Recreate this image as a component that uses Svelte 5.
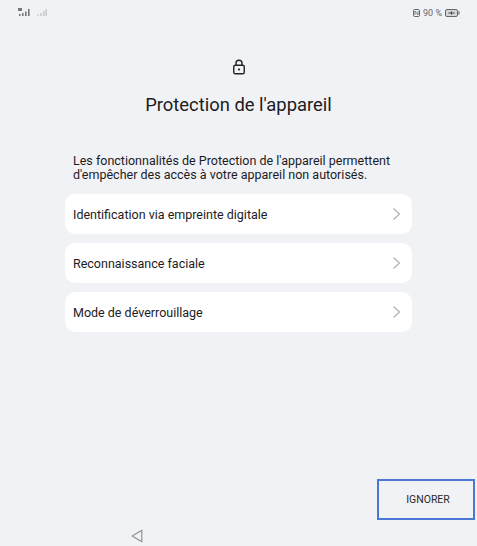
<script>
  const rows = [
    "Identification via empreinte digitale",
    "Reconnaissance faciale",
    "Mode de déverrouillage"
  ];
</script>

<div class="screen">
  <header class="status">
    <div class="status-left">
      <svg width="13" height="9" viewBox="0 0 13 9">
        <rect x="0" y="0" width="4" height="3" fill="#77787c" />
        <path d="M1 8h1.6V6H1zM4 8h1.6V5H4zM7 8h1.6V3.5H7zM10 8h1.6V1H10z" fill="#77787c" />
      </svg>
      <svg width="10" height="9" viewBox="0 0 10 9">
        <path d="M0 8h1.6V6.5H0zM3 8h1.6V5H3zM6 8h1.6V3H6zM8.4 8H10V1H8.4z" fill="#c9cace" />
      </svg>
    </div>
    <div class="status-right">
      <svg width="7" height="8" viewBox="0 0 7 8">
        <rect x="0.5" y="0.5" width="6" height="7" rx="1.2" fill="none" stroke="#66676b" />
        <path d="M2 2l3 4M2 2v4M5 2v4" stroke="#66676b" stroke-width="0.8" fill="none" />
      </svg>
      <span>90 %</span>
      <svg width="15" height="8" viewBox="0 0 15 8">
        <rect x="0.5" y="0.5" width="12" height="7" rx="1.5" fill="#d4d5d8" stroke="#66676b" />
        <rect x="13.3" y="2.5" width="1.2" height="3" fill="#66676b" />
        <path d="M3.5 4h6M6.5 2.4v3.2" stroke="#444" stroke-width="1" />
      </svg>
    </div>
  </header>

  <main class="content">
    <svg class="lock" width="14" height="16" viewBox="0 0 14 16">
      <rect x="1.75" y="6.25" width="10.5" height="8.5" rx="1.6" fill="none" stroke="#222" stroke-width="1.4" />
      <path d="M4 6.2V4.2a3 3 0 0 1 6 0v2" fill="none" stroke="#222" stroke-width="1.4" />
      <circle cx="7" cy="10.5" r="1.1" fill="#222" />
    </svg>
    <h1>Protection de l'appareil</h1>
    <p>Les fonctionnalités de Protection de l'appareil permettent d'empêcher des accès à votre appareil non autorisés.</p>
    <ul>
      {#each rows as row}
        <li>
          <span>{row}</span>
          <svg width="9" height="14" viewBox="0 0 9 14">
            <path d="M1.5 1.5L7.5 7L1.5 12.5" fill="none" stroke="#b0b1b5" stroke-width="1.2" />
          </svg>
        </li>
      {/each}
    </ul>
  </main>

  <div class="actions">
    <button>IGNORER</button>
  </div>

  <footer class="nav">
    <svg width="12" height="14" viewBox="0 0 12 14">
      <path d="M10.8 1.2V12.8L1.2 7Z" fill="none" stroke="#8f9094" stroke-width="1.2" stroke-linejoin="round" />
    </svg>
  </footer>
</div>

<style>
  :global(body) {
    background: #f1f2f6;
  }
  .screen {
    display: flex;
    flex-direction: column;
    height: 546px;
    width: 477px;
    overflow: hidden;
    background: #f1f2f6;
    color: #1c1c1e;
    font-family: Roboto, "Liberation Sans", sans-serif;
  }
  .status {
    display: flex;
    justify-content: space-between;
    align-items: center;
    height: 9px;
    margin-top: 8px;
    padding: 0 17px 0 18px;
  }
  .status-left {
    display: flex;
    align-items: center;
    gap: 6px;
  }
  .status-right {
    display: flex;
    align-items: center;
    gap: 3px;
    font-size: 9px;
    color: #66676b;
  }
  .content {
    display: flex;
    flex-direction: column;
    align-items: center;
    padding: 42px 65px 0;
  }
  .lock {
    display: block;
  }
  h1 {
    margin: 18px 0 0;
    font-size: 18.4px;
    font-weight: 400;
    line-height: 24px;
    white-space: nowrap;
  }
  p {
    align-self: stretch;
    margin: 37px 0 0;
    padding-left: 8px;
    font-size: 12.5px;
    line-height: 14px;
  }
  ul {
    align-self: stretch;
    display: flex;
    flex-direction: column;
    gap: 9px;
    margin: 12px 0 0;
    padding: 0;
    list-style: none;
  }
  li {
    display: flex;
    justify-content: space-between;
    align-items: center;
    height: 40px;
    padding: 0 11px 0 8px;
    background: #fff;
    border-radius: 10px;
    font-size: 12.5px;
  }
  .actions {
    display: flex;
    justify-content: flex-end;
    margin-top: auto;
    padding-right: 2px;
  }
  button {
    width: 98px;
    height: 41px;
    padding: 0 0 0 4px;
    background: transparent;
    border: 2px solid #4a78d8;
    font: inherit;
    font-size: 10.5px;
    color: #2a2a2c;
  }
  .nav {
    display: flex;
    height: 26px;
    align-items: flex-end;
    padding-left: 131px;
    padding-bottom: 3px;
    box-sizing: border-box;
  }
</style>
